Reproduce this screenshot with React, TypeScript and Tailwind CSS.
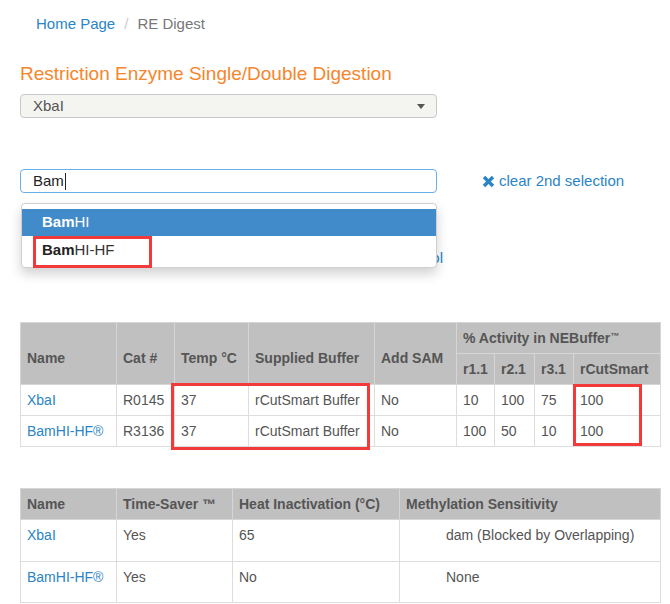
import React from 'react';

const LINK = 'text-[#2a84c6]';

const th = 'border border-[#d6d6d6] bg-[#c0c0c0] px-[6px] py-[5px] text-left align-middle font-bold leading-5 text-[#555]';
const td = 'border border-[#dddddd] px-[6px] py-[5px] leading-5 text-[#555]';

const digestRows = [
  { name: 'XbaI', cat: 'R0145', temp: '37', buffer: 'rCutSmart Buffer', sam: 'No', r11: '10', r21: '100', r31: '75', cut: '100' },
  { name: 'BamHI-HF®', cat: 'R3136', temp: '37', buffer: 'rCutSmart Buffer', sam: 'No', r11: '100', r21: '50', r31: '10', cut: '100' },
];

const propRows = [
  { name: 'XbaI', saver: 'Yes', heat: '65', methyl: 'dam (Blocked by Overlapping)', h: 'h-[42px]' },
  { name: 'BamHI-HF®', saver: 'Yes', heat: 'No', methyl: 'None', h: 'h-[41px]' },
];

function ClearIcon() {
  return (
    <svg width="13" height="13" viewBox="0 0 13 13" className="shrink-0">
      <path d="M2 2 L11 11 M11 2 L2 11" stroke="#2a84c6" strokeWidth="3.4" strokeLinecap="butt" />
    </svg>
  );
}

export default function App() {
  return (
    <div className="min-h-screen bg-white px-5 text-[#555]" style={{ fontFamily: '"Liberation Sans", Arial, sans-serif' }}>
      {/* breadcrumb */}
      <div className="flex items-center pl-4 pt-[14px] text-[15px] leading-5">
        <a className={LINK}>Home Page</a>
        <span className="mx-[9px] text-[#ccc]">/</span>
        <span className="text-[#777]">RE Digest</span>
      </div>

      <h1 className="mt-[30px] text-[19px] leading-5 text-[#f6862c]">Restriction Enzyme Single/Double Digestion</h1>

      <div className="mt-[10px] flex h-[24px] w-[417px] items-center justify-between rounded-[4px] border border-[#c8c8c8] bg-[#f4f4f0] pl-[12px] pr-[11px] text-[15px] text-[#555]">
        <span>XbaI</span>
        <span className="h-0 w-0 border-x-[4px] border-t-[5px] border-x-transparent border-t-[#555]" />
      </div>

      {/* second enzyme */}
      <div className="relative mt-[51px] flex items-center">
        <div className="flex h-[24px] w-[417px] items-center rounded-[4px] border border-[#66afe9] pl-[12px] text-[15px] text-[#222]">
          <span>Bam</span>
          <span className="ml-px h-[17px] w-px bg-[#222]" />
        </div>
        <a className={`ml-[45px] flex items-center gap-1 text-[15px] leading-5 ${LINK}`}>
          <ClearIcon />
          clear 2nd selection
        </a>

        <div className="absolute left-px top-[34px] z-10 w-[416px] rounded-[4px] border border-[#cfcfcf] bg-white pb-[3px] pt-[5px] text-[15px] shadow-[0_6px_12px_rgba(0,0,0,0.18)]">
          <div className="flex h-[27px] items-center bg-[#428bca] pl-5 text-white">
            <b>Bam</b>HI
          </div>
          <div className="relative flex h-[28px] items-center pl-5 text-[#333]">
            <b className="text-[#222]">Bam</b>HI-HF
            <div className="absolute left-[11px] top-0 h-[32px] w-[119px] border-[3px] border-[#f23a3a]" />
          </div>
        </div>
      </div>

      <div className={`mt-[55px] w-[423px] text-right text-[15px] leading-5 ${LINK}`}>View Protocol</div>

      {/* digest table */}
      <div className="relative mt-[54px] w-[640px]">
        <table className="w-[640px] table-fixed border-collapse text-[14px]">
          <colgroup>
            <col className="w-[96px]" />
            <col className="w-[58px]" />
            <col className="w-[74px]" />
            <col className="w-[126px]" />
            <col className="w-[82px]" />
            <col className="w-[38px]" />
            <col className="w-[40px]" />
            <col className="w-[39px]" />
            <col className="w-[87px]" />
          </colgroup>
          <thead>
            <tr>
              <th rowSpan={2} className={`${th} pt-[14px]`}>Name</th>
              <th rowSpan={2} className={`${th} pt-[14px]`}>Cat #</th>
              <th rowSpan={2} className={`${th} pt-[14px]`}>Temp °C</th>
              <th rowSpan={2} className={`${th} pt-[14px]`}>Supplied Buffer</th>
              <th rowSpan={2} className={`${th} pt-[14px]`}>Add SAM</th>
              <th colSpan={4} className={th}>
                % Activity in NEBuffer<sup className="text-[9px]">™</sup>
              </th>
            </tr>
            <tr>
              <th className={th}>r1.1</th>
              <th className={th}>r2.1</th>
              <th className={th}>r3.1</th>
              <th className={th}>rCutSmart</th>
            </tr>
          </thead>
          <tbody>
            {digestRows.map((r) => (
              <tr key={r.cat}>
                <td className={td}><a className={LINK}>{r.name}</a></td>
                <td className={td}>{r.cat}</td>
                <td className={td}>{r.temp}</td>
                <td className={td}>{r.buffer}</td>
                <td className={td}>{r.sam}</td>
                <td className={td}>{r.r11}</td>
                <td className={td}>{r.r21}</td>
                <td className={td}>{r.r31}</td>
                <td className={td}>{r.cut}</td>
              </tr>
            ))}
          </tbody>
        </table>
        <div className="absolute left-[151px] top-[61px] h-[67px] w-[199px] border-[3px] border-[#f23a3a]" />
        <div className="absolute left-[553px] top-[62px] h-[62px] w-[69px] border-[3px] border-[#f23a3a]" />
      </div>

      {/* properties table */}
      <table className="mt-[41px] w-[640px] table-fixed border-collapse text-[14px]">
        <colgroup>
          <col className="w-[96px]" />
          <col className="w-[116px]" />
          <col className="w-[167px]" />
          <col className="w-[261px]" />
        </colgroup>
        <thead>
          <tr>
            <th className={th}>Name</th>
            <th className={th}>Time-Saver ™</th>
            <th className={th}>Heat Inactivation (°C)</th>
            <th className={th}>Methylation Sensitivity</th>
          </tr>
        </thead>
        <tbody>
          {propRows.map((r) => (
            <tr key={r.name} className={r.h}>
              <td className={`${td} align-top`}><a className={LINK}>{r.name}</a></td>
              <td className={`${td} align-top`}>{r.saver}</td>
              <td className={`${td} align-top`}>{r.heat}</td>
              <td className={`${td} align-top pl-[46px]`}>{r.methyl}</td>
            </tr>
          ))}
        </tbody>
      </table>
    </div>
  );
}
